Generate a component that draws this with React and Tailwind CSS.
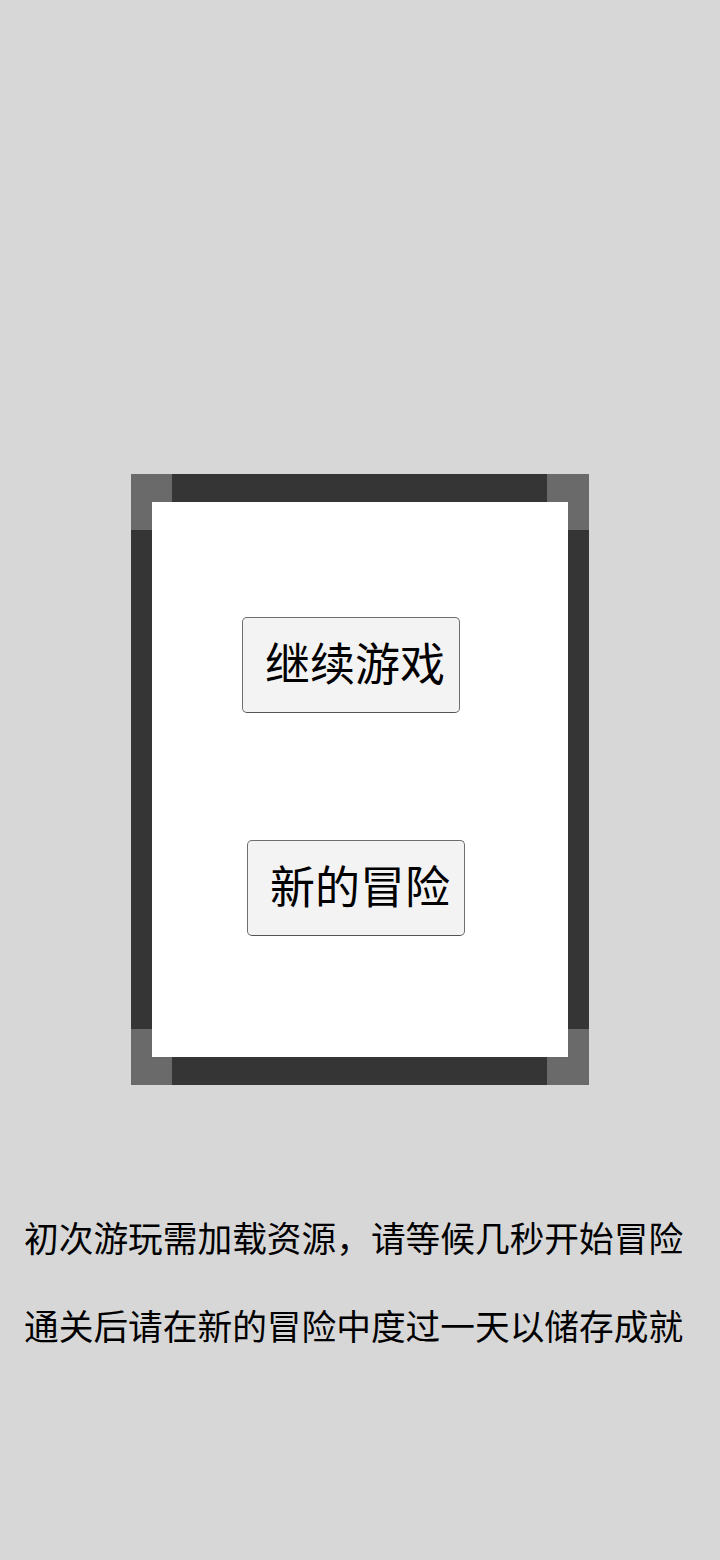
export default function App() {
  const font = { fontFamily: '"Noto Sans CJK SC", "Noto Sans", sans-serif' };
  return (
    <div className="w-[720px] h-[1560px] bg-[#d7d7d7] flex flex-col" style={font}>
      {/* framed menu panel */}
      <div className="relative ml-[131px] mt-[474px] w-[458px] h-[611px] bg-[#353535] px-[21px] py-[28px]">
        <div className="absolute left-0 top-0 w-[41px] h-[56px] bg-[#6a6a6a]" />
        <div className="absolute right-0 top-0 w-[42px] h-[56px] bg-[#6a6a6a]" />
        <div className="absolute left-0 bottom-0 w-[41px] h-[56px] bg-[#6a6a6a]" />
        <div className="absolute right-0 bottom-0 w-[42px] h-[56px] bg-[#6a6a6a]" />
        <div className="relative w-full h-full bg-white flex flex-col">
          <button className="ml-[90px] mt-[115px] w-[218px] h-[96px] bg-[#f3f3f3] border border-[#6e6e6e] border-b-[#555] rounded-[5px] text-left pl-[22px] pb-[8px] text-[45px] leading-none text-black">
            继续游戏
          </button>
          <button className="ml-[95px] mt-[127px] w-[218px] h-[96px] bg-[#f3f3f3] border border-[#6e6e6e] border-b-[#555] rounded-[5px] text-left pl-[22px] pb-[8px] text-[45px] leading-none text-black">
            新的冒险
          </button>
        </div>
      </div>
      {/* notes */}
      <div className="ml-[24px] mt-[135px] flex flex-col gap-[53px] text-[34.7px] leading-[35px] text-black whitespace-nowrap">
        <p>初次游玩需加载资源，请等候几秒开始冒险</p>
        <p>通关后请在新的冒险中度过一天以储存成就</p>
      </div>
    </div>
  );
}
